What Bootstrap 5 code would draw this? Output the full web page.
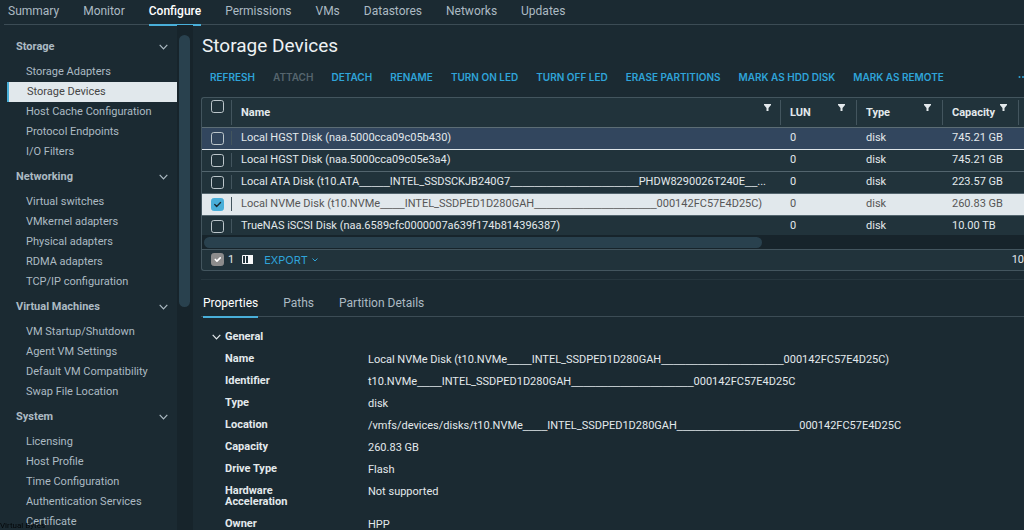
<!DOCTYPE html>
<html lang="en">
<head>
<meta charset="utf-8">
<meta name="viewport" content="width=device-width, initial-scale=1">
<title>Storage Devices</title>
<link href="https://cdn.jsdelivr.net/npm/bootstrap@5.3.0/dist/css/bootstrap.min.css" rel="stylesheet">
<style>
body{background:#1b2a32;color:#e3e9ec;font-family:Roboto,"Liberation Sans",sans-serif;font-size:11px;line-height:20px}
button,a{font:inherit;color:inherit}
svg{display:block;fill:none;stroke:currentColor}
/* top tabs */
.topnav{margin-left:4px;border-bottom:1px solid #3c4c55;color:#acbac3;gap:24px;height:25px;padding-left:4px}
.topnav .nav-link{padding:0;line-height:23px;color:inherit;font-size:12px}
.topnav .active{color:#fff;box-shadow:0 2px #49afd9;font-weight:500}
/* sidebar */
.side{width:177px;color:#acbac3;padding-top:12px}
.group-btn{border:0;background:none;padding:0 9px 0 16px;height:20px;font-weight:700}
.side ul{padding:5px 0;margin:0 0 0 7px}
.side li a{display:block;padding-left:19px;line-height:20px;text-decoration:none;white-space:nowrap}
.side li a.current{background:#e1e8ec;color:#454545;border-left:2px solid #49afd9;padding-left:18px}
.track{width:16px;background:#17242b;padding:10px 3px 0 2px}
.thumb{height:272px;width:11px;border-radius:6px;background:#29414e}
/* main area */
main{padding-left:8px}
h1{font-size:19px;line-height:22px;padding:10px 0 0 1px;margin:0;font-weight:400;color:#eef2f4}
.tools{padding:0 0 0 9px;margin-top:10px;height:20px;margin-bottom:10px;font-family:Inter,"Liberation Sans",sans-serif;font-size:10px;font-weight:600;color:#2fa4d9}
.tools .actions{gap:18px}
.tools button,.foot button{border:0;padding:0;background:none;white-space:nowrap}
.tools button:disabled{color:#56656e}
.dots{fill:currentColor;stroke:none}
.grid-box{background:#21333b;border:1px solid #43555e;border-right:0;border-radius:3px 0 0 3px}
.rows{height:137px}
.disks{width:100%;table-layout:fixed;border-collapse:separate;border-spacing:0}
.disks .c-pick{width:30px}
.disks .c-lun,.disks .c-cap{width:76px}
.disks .c-type{width:86px}
.disks .c-next{width:5px}
.disks th{height:30px;font-size:11px;font-weight:700;padding:0 0 0 9px;border-bottom:1px solid #5c6d75}
.disks td{height:22px;line-height:20px;padding:0 0 0 9px;border-bottom:1px solid #53656e;white-space:nowrap;overflow:hidden;text-overflow:ellipsis}
.disks td.name{padding-right:10px}
.disks .pick{padding:0 0 0 9px}
.split{border-left:1px solid #43555e;height:25px;line-height:25px;margin-left:-10px;padding:0 12px 0 9px}
.plain{height:25px;line-height:25px;padding-right:10px}
.vbar{border-left:1px solid #43555e;height:14px}
.disks .pick .tall{height:25px}
.hovered td{background:#32465e;border-bottom-color:#dfe5ea}
.picked td{background:#e1e8ec;color:#565656}
.picked .vbar{border-color:#43555e}
.form-check-input{width:13px;height:13px;margin:0;border:1px solid #bcc6cb;border-radius:2px;background-color:transparent;flex:none;float:none}
.form-check-input:checked{background-color:#49afd9;border-color:#49afd9}
.picked .form-check-input:checked{background-image:url("data:image/svg+xml,%3csvg xmlns='http://www.w3.org/2000/svg' viewBox='0 0 20 20'%3e%3cpath fill='none' stroke='%231b2a32' stroke-linecap='round' stroke-linejoin='round' stroke-width='2.5' d='m5 10 3.500 3.500 7-7'/%3e%3c/svg%3e")}
.foot .form-check-input:checked{background-color:#8c8c8c;border-color:#8c8c8c;opacity:1}
.filt{width:7px;height:7px;fill:#e3e9ec;stroke:none}
.us{font-family:"Liberation Sans",sans-serif;line-height:1}
.hscroll{background:#17242b;height:15px;padding:2px 0 0 2px;border-bottom:1px solid #43555e}
.hthumb{height:11px;width:68%;border-radius:6px;background:#29414e}
.foot{height:20px;padding-left:9px;line-height:18px}
.foot .export{margin-left:11px;font-family:Inter,"Liberation Sans",sans-serif;font-size:11px}
.foot button{color:#2fa4d9}
.divide{border-top:1px solid #26363e;margin-top:8px}
.subtabs{margin-top:12px;border-bottom:1px solid #3c4c55;height:25px;gap:25px;padding-left:2px;font-size:12px}
.subtabs .nav-link{padding:0;line-height:22px;color:#acbac3}
.subtabs .active{color:#fff;box-shadow:0 2px #49afd9}
.general{border:0;background:none;padding:0;margin:10px 0 0 11px;font-weight:700;height:20px}
.facts{display:grid;grid-template-columns:143px 1fr;margin:0 0 0 24px}
.facts dt{font-weight:700;line-height:11px;padding:6px 60px 5px 0}
.facts dd{margin:0 0 -2px;line-height:20px;padding-top:3px;white-space:nowrap}
.status{position:fixed;left:0;bottom:0;font-size:8px;line-height:9px;color:#05080a}
</style>
</head>
<body class="vh-100 overflow-hidden d-flex flex-column">
<nav class="nav topnav flex-nowrap">
<a class="nav-link" href="#">Summary</a><a class="nav-link" href="#">Monitor</a><a class="nav-link active" href="#">Configure</a><a class="nav-link" href="#">Permissions</a><a class="nav-link" href="#">VMs</a><a class="nav-link" href="#">Datastores</a><a class="nav-link" href="#">Networks</a><a class="nav-link" href="#">Updates</a>
</nav>
<div class="d-flex flex-grow-1 overflow-hidden">
<aside class="side flex-shrink-0 overflow-hidden">
<button class="group-btn w-100 d-flex align-items-center justify-content-between">Storage<svg width="9" height="6"><path d="M.7.8 4.500 4.800 8.300.8" stroke-width="1.200"/></svg></button>
<ul class="list-unstyled"><li><a href="#">Storage Adapters</a></li><li><a href="#" class="current">Storage Devices</a></li><li><a href="#">Host Cache Configuration</a></li><li><a href="#">Protocol Endpoints</a></li><li><a href="#">I/O Filters</a></li></ul>
<button class="group-btn w-100 d-flex align-items-center justify-content-between">Networking<svg width="9" height="6"><path d="M.7.8 4.500 4.800 8.300.8" stroke-width="1.200"/></svg></button>
<ul class="list-unstyled"><li><a href="#">Virtual switches</a></li><li><a href="#">VMkernel adapters</a></li><li><a href="#">Physical adapters</a></li><li><a href="#">RDMA adapters</a></li><li><a href="#">TCP/IP configuration</a></li></ul>
<button class="group-btn w-100 d-flex align-items-center justify-content-between">Virtual Machines<svg width="9" height="6"><path d="M.7.8 4.500 4.800 8.300.8" stroke-width="1.200"/></svg></button>
<ul class="list-unstyled"><li><a href="#">VM Startup/Shutdown</a></li><li><a href="#">Agent VM Settings</a></li><li><a href="#">Default VM Compatibility</a></li><li><a href="#">Swap File Location</a></li></ul>
<button class="group-btn w-100 d-flex align-items-center justify-content-between">System<svg width="9" height="6"><path d="M.7.8 4.500 4.800 8.300.8" stroke-width="1.200"/></svg></button>
<ul class="list-unstyled"><li><a href="#">Licensing</a></li><li><a href="#">Host Profile</a></li><li><a href="#">Time Configuration</a></li><li><a href="#">Authentication Services</a></li><li><a href="#">Certificate</a></li></ul>
</aside>
<div class="track flex-shrink-0"><div class="thumb"></div></div>
<main class="flex-grow-1 overflow-hidden">
<h1>Storage Devices</h1>
<div class="tools d-flex align-items-center justify-content-between">
<div class="actions d-flex"><button>REFRESH</button><button disabled>ATTACH</button><button>DETACH</button><button>RENAME</button><button>TURN ON LED</button><button>TURN OFF LED</button><button>ERASE PARTITIONS</button><button>MARK AS HDD DISK</button><button>MARK AS REMOTE</button></div>
<button aria-label="More actions"><svg class="dots" width="6" height="4"><circle cx="1.500" cy="2" r="1"/><circle cx="5" cy="2" r="1"/></svg></button>
</div>
<section class="grid-box">
<div class="rows overflow-hidden">
<table class="disks">
<colgroup><col class="c-pick"><col><col class="c-lun"><col class="c-type"><col class="c-cap"><col class="c-next"></colgroup>
<thead><tr>
<th class="pick"><div class="d-flex justify-content-between"><input class="form-check-input" type="checkbox" aria-label="Select all"><span class="vbar tall"></span></div></th>
<th><div class="plain d-flex justify-content-between"><span>Name</span><svg class="filt mt-1"><path d="M0 0h7v1L4.500 4v3h-2V4L0 1z"/></svg></div></th>
<th><div class="split d-flex justify-content-between"><span>LUN</span><svg class="filt mt-1"><path d="M0 0h7v1L4.500 4v3h-2V4L0 1z"/></svg></div></th>
<th><div class="split d-flex justify-content-between"><span>Type</span><svg class="filt mt-1"><path d="M0 0h7v1L4.500 4v3h-2V4L0 1z"/></svg></div></th>
<th><div class="split d-flex justify-content-between"><span>Capacity</span><svg class="filt mt-1"><path d="M0 0h7v1L4.500 4v3h-2V4L0 1z"/></svg></div></th>
<th><div class="split"></div></th>
</tr></thead>
<tbody>
<tr class="hovered"><td class="pick"><div class="d-flex align-items-center justify-content-between"><input class="form-check-input" type="checkbox" aria-label="Select disk"><span class="vbar"></span></div></td><td class="name">Local HGST Disk (naa.5000cca09c05b430)</td><td>0</td><td>disk</td><td>745.21 GB</td><td></td></tr>
<tr><td class="pick"><div class="d-flex align-items-center justify-content-between"><input class="form-check-input" type="checkbox" aria-label="Select disk"><span class="vbar"></span></div></td><td class="name">Local HGST Disk (naa.5000cca09c05e3a4)</td><td>0</td><td>disk</td><td>745.21 GB</td><td></td></tr>
<tr><td class="pick"><div class="d-flex align-items-center justify-content-between"><input class="form-check-input" type="checkbox" aria-label="Select disk"><span class="vbar"></span></div></td><td class="name">Local ATA Disk (t10.ATA<span class="us">_____</span>INTEL_SSDSCKJB240G7<span class="us">_____________________</span>PHDW8290026T240E<span class="us">__</span>...</td><td>0</td><td>disk</td><td>223.57 GB</td><td></td></tr>
<tr class="picked"><td class="pick"><div class="d-flex align-items-center justify-content-between"><input class="form-check-input" type="checkbox" checked aria-label="Select disk"><span class="vbar"></span></div></td><td class="name">Local NVMe Disk (t10.NVMe<span class="us">____</span>INTEL_SSDPED1D280GAH<span class="us">____________________</span>000142FC57E4D25C)</td><td>0</td><td>disk</td><td>260.83 GB</td><td></td></tr>
<tr><td class="pick"><div class="d-flex align-items-center justify-content-between"><input class="form-check-input" type="checkbox" aria-label="Select disk"><span class="vbar"></span></div></td><td class="name">TrueNAS iSCSI Disk (naa.6589cfc0000007a639f174b814396387)</td><td>0</td><td>disk</td><td>10.00 TB</td><td></td></tr>
</tbody></table>
</div>
<div class="hscroll"><div class="hthumb"></div></div>
<div class="foot d-flex align-items-center"><input class="form-check-input" type="checkbox" checked disabled aria-label="Selected rows"><span class="ms-1">1</span>
<button class="ms-2" aria-label="Manage columns"><svg width="11" height="9" class="text-light"><path d="M.5.5h10v8H.5zM3.500 0v9M6.500 0v9"/><path d="M7 0h4v9H7z" fill="currentColor" stroke="none"/></svg></button>
<button class="export d-flex align-items-center gap-1">EXPORT<svg width="6" height="4"><path d="M.5.5 3 3 5.500.5"/></svg></button>
<span class="ms-auto">10</span></div>
</section>
<div class="divide"></div>
<nav class="nav subtabs"><a class="nav-link active" href="#">Properties</a><a class="nav-link" href="#">Paths</a><a class="nav-link" href="#">Partition Details</a></nav>
<button class="general d-flex align-items-center"><svg width="9" height="6" class="me-1"><path d="M.7.8 4.500 4.800 8.300.8" stroke-width="1.200"/></svg>General</button>
<dl class="facts">
<dt>Name</dt><dd>Local NVMe Disk (t10.NVMe<span class="us">____</span>INTEL_SSDPED1D280GAH<span class="us">____________________</span>000142FC57E4D25C)</dd>
<dt>Identifier</dt><dd>t10.NVMe<span class="us">____</span>INTEL_SSDPED1D280GAH<span class="us">____________________</span>000142FC57E4D25C</dd>
<dt>Type</dt><dd>disk</dd>
<dt>Location</dt><dd>/vmfs/devices/disks/t10.NVMe<span class="us">____</span>INTEL_SSDPED1D280GAH<span class="us">____________________</span>000142FC57E4D25C</dd>
<dt>Capacity</dt><dd>260.83 GB</dd>
<dt>Drive Type</dt><dd>Flash</dd>
<dt>Hardware Acceleration</dt><dd>Not supported</dd>
<dt>Owner</dt><dd>HPP</dd>
</dl>
</main>
</div>
<div class="status">Virtual Bytes</div>
<script src="https://cdn.jsdelivr.net/npm/bootstrap@5.3.0/dist/js/bootstrap.bundle.min.js"></script>
</body>
</html>
